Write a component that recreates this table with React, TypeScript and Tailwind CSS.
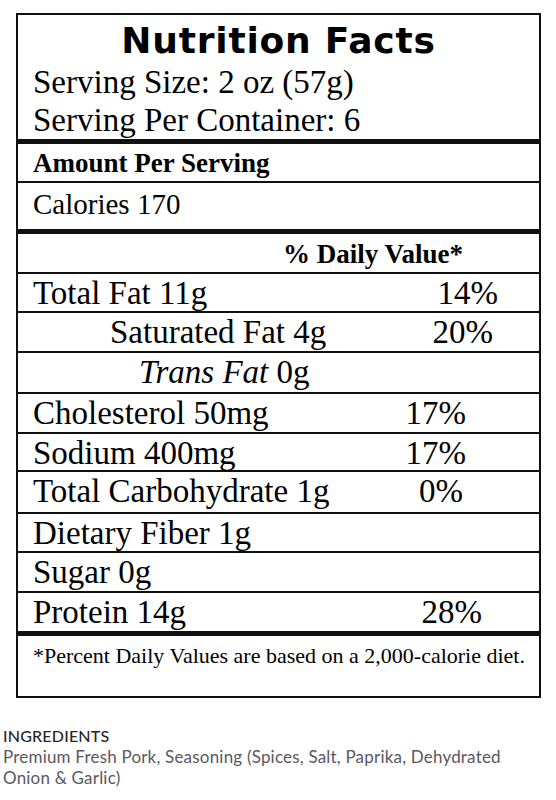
import React from 'react';

type Row = {
  label: React.ReactNode;
  pct?: string;
  h: string;
  indent: string;
  pctMr: string;
  last?: boolean;
};

const rows: Row[] = [
  { label: 'Total Fat 11g', pct: '14%', h: 'h-[39px]', indent: 'pl-[15px]', pctMr: 'mr-[41px]' },
  { label: 'Saturated Fat 4g', pct: '20%', h: 'h-[40px]', indent: 'pl-[92px]', pctMr: 'mr-[46px]' },
  {
    label: (
      <>
        <span className="italic">Trans Fat</span> 0g
      </>
    ),
    h: 'h-[41px]',
    indent: 'pl-[121px]',
    pctMr: 'mr-0',
  },
  { label: 'Cholesterol 50mg', pct: '17%', h: 'h-[40px]', indent: 'pl-[15px]', pctMr: 'mr-[73px]' },
  { label: 'Sodium 400mg', pct: '17%', h: 'h-[38px]', indent: 'pl-[15px]', pctMr: 'mr-[73px]' },
  { label: 'Total Carbohydrate 1g', pct: '0%', h: 'h-[42px]', indent: 'pl-[15px]', pctMr: 'mr-[76px]' },
  { label: 'Dietary Fiber 1g', h: 'h-[39px]', indent: 'pl-[15px]', pctMr: 'mr-0' },
  { label: 'Sugar 0g', h: 'h-[40px]', indent: 'pl-[15px]', pctMr: 'mr-0' },
  { label: 'Protein 14g', pct: '28%', h: 'h-[43px]', indent: 'pl-[15px]', pctMr: 'mr-[57px]', last: true },
];

const App = () => {
  return (
    <div className="w-[556px] h-[800px] bg-white overflow-hidden">
      {/* Label */}
      <div className="mt-[13px] ml-[16px] w-[525px] border-2 border-[#111] text-black font-['Liberation_Serif',serif]">
        {/* Header */}
        <div className="h-[129px] border-b-[5px] border-[#111] pl-[15px]">
          <h1 className="text-center pr-[15px] pt-[6px] text-[36px] leading-[40px] font-bold tracking-[0.8px] font-['DejaVu_Sans',sans-serif]">
            Nutrition Facts
          </h1>
          <p className="text-[33px] leading-[38px] mt-[2px]">Serving Size: 2 oz (57g)</p>
          <p className="text-[33px] leading-[38px]">Serving Per Container: 6</p>
        </div>

        <div className="h-[39px] border-b-2 border-[#111] pl-[15px] text-[27px] leading-[38px] font-bold">
          Amount Per Serving
        </div>

        <div className="h-[51px] border-b-[5px] border-[#111] pl-[15px] pt-[2px] text-[29px] leading-[38px]">
          Calories 170
        </div>

        <div className="h-[40px] border-b-2 border-[#111] flex justify-end pr-[76px] pt-[1px] text-[27px] leading-[38px] font-bold">
          % Daily Value*
        </div>

        {rows.map((r, i) => (
          <div
            key={i}
            className={`${r.h} ${r.indent} flex text-[33px] leading-[38px] ${r.last ? 'border-b-[5px]' : 'border-b-2'} border-[#111]`}
          >
            <span>{r.label}</span>
            {r.pct && <span className={`ml-auto ${r.pctMr}`}>{r.pct}</span>}
          </div>
        ))}

        {/* Footnote */}
        <div className="h-[60px] pl-[15px] pt-[6px] text-[22px] leading-[28px]">
          *Percent Daily Values are based on a 2,000-calorie diet.
        </div>
      </div>

      {/* Ingredients */}
      <div className="mt-[28px] pl-[3px] w-[520px] font-['Lato',sans-serif] text-[17px]">
        <div className="font-medium text-[16px] text-[#262626] leading-[20px] tracking-[0.2px]">INGREDIENTS</div>
        <p className="text-[#5b5760] leading-[21px] tracking-[0.2px]">
          Premium Fresh Pork, Seasoning (Spices, Salt, Paprika, Dehydrated Onion &amp; Garlic)
        </p>
      </div>
    </div>
  );
};

export default App;
